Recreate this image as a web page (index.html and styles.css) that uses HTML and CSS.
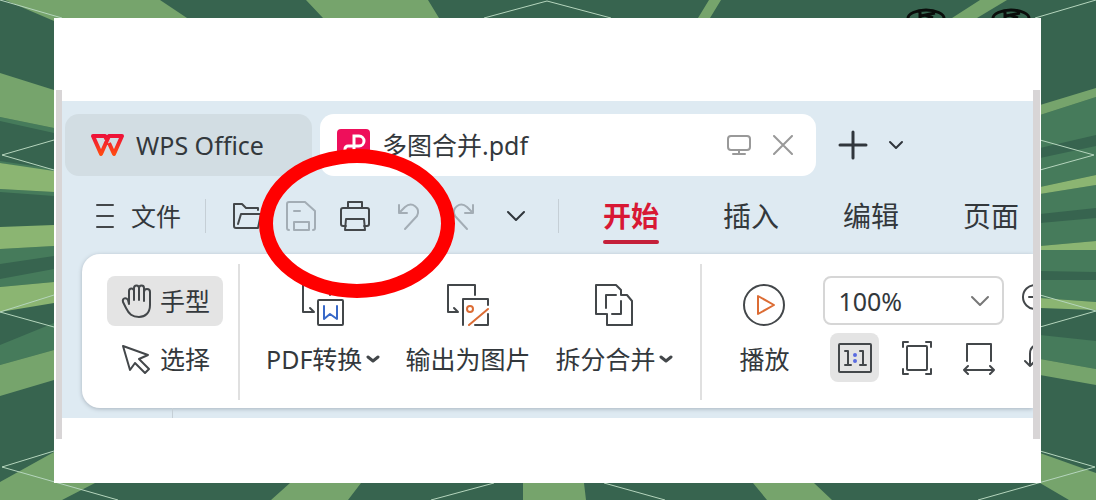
FILE: index.html
```html
<!DOCTYPE html>
<html lang="zh-CN">
<head>
    <meta charset="UTF-8">
    <meta name="viewport" content="width=device-width, initial-scale=1.0">
    <title>多图合并.pdf - WPS Office</title>
    <link rel="stylesheet" href="styles.css">
</head>
<body>

<!-- Green rays behind the sheet -->
<svg class="backdrop" viewBox="0 0 1096 500" preserveAspectRatio="none" aria-hidden="true">
    <rect width="1096" height="500" fill="#37644f"/>
    <g fill="#467b5b">
        <path d="M0 117l54 11v5L0 121zM0 161l54 8v4L0 163zM0 189l54 3v4L0 192zM0 249l54-3v10L0 264zM0 279l54-10v13L0 287zM0 345l54-22v27L0 365z"/>
        <path d="M1040 115l56-18v38l-56 13zM1040 158l56-12v29l-56 12zM1040 194l56-9v23l-56 6zM1040 223l56-5v23l-56 5zM1040 250h56v22l-56-1zM1040 280h56v22l-56-4zM1040 335l56 6v28l-56-10z"/>
    </g>
    <g fill="#76a46c">
        <path d="M5 0h155l27 18H54v3zM306 0h122l11 18H323zM709 0h12l-11 18h-12zM980 0h27l-30 18h-25z"/>
        <path d="M0 73l54 17v38L0 117zM0 365l54-15v30L0 396zM0 482l54-30v31h41l-33 17H0z"/>
        <path d="M1040 105l56-17v9l-56 18zM1040 359l56 10v16l-56-10zM1040 453l56 20v27h-27l-29-17z"/>
        <path d="M290 483h71l-13 17h-77zM523 483h61l2 17h-63zM753 483h61l18 17h-65z"/>
    </g>
    <g fill="#8bb572">
        <path d="M0 163l54 8v21L0 189zM0 227l54-2v21L0 249zM0 287l54-5v21L0 312z"/>
        <path d="M1040 187l56-12v10l-56 9zM1040 246l56-5v9h-56zM1040 298l56 4v8l-56-2z"/>
    </g>
    <g fill="none" stroke="#b5d5bd" stroke-width="1">
        <path d="M0 0l62 18M484 18l63-17 64 17M1096 0l-61 18"/>
        <path d="M54 140L2 155l52 15M54 295L0 312l54 15M54 451L2 467l116 33"/>
        <path d="M1040 140l54 15-54 15M1040 295l56 16-56 16M1040 451l55 16-117 33M494 483l-63 17M604 483l61 17"/>
    </g>
    <g fill="none" stroke="#0a0d0b" stroke-width="3">
        <path d="M908 18c0-4 8-8 18-8s18 4 18 8M920 12v6M935 13l-14 3M925 15l8 3"/>
        <path d="M993 18c0-4 8-8 18-8s18 4 18 8M1005 12v6M1020 13l-14 3M1010 15l8 3"/>
    </g>
</svg>

<main class="sheet">
    <div class="frame">
        <div class="window">

            <!-- Document tabs -->
            <header class="tabs">
                <button class="tab tab-home">
                    <svg width="34" height="24" viewBox="0 0 34 24" aria-hidden="true">
                        <defs>
                            <linearGradient id="wps" x1="0" y1="0" x2="0" y2="1">
                                <stop offset="0" stop-color="#ee1238"/>
                                <stop offset="1" stop-color="#ff4a12"/>
                            </linearGradient>
                        </defs>
                        <path d="M18 9l-3-6H3l8 18 8-18h13l-8 18-5-11" fill="none" stroke="url(#wps)" stroke-width="4" stroke-linejoin="round"/>
                    </svg>
                    <span>WPS Office</span>
                </button>
                <div class="tab tab-file">
                    <svg width="33" height="33" viewBox="0 0 33 33" aria-hidden="true">
                        <rect width="33" height="33" rx="4" fill="#ee0f5b"/>
                        <path d="M17 22V7h5a5 5 0 0 1 0 10H11a3 3 0 0 0-3 3v2" fill="none" stroke="#fff" stroke-width="3"/>
                    </svg>
                    <span class="file-name">多图合并.pdf</span>
                    <button class="plain" aria-label="窗口">
                        <svg class="line muted" width="24" height="24" viewBox="0 0 24 24">
                            <rect x="1" y="3" width="22" height="14" rx="3"/>
                            <path d="M12 17v4M6 21h12"/>
                        </svg>
                    </button>
                    <button class="plain" aria-label="关闭">
                        <svg class="line muted" width="20" height="20" viewBox="0 0 20 20">
                            <path d="M1 1l18 18M19 1L1 19"/>
                        </svg>
                    </button>
                </div>
                <button class="plain new-tab" aria-label="新建">
                    <svg class="line thick" width="30" height="30" viewBox="0 0 30 30">
                        <path d="M15 2v26M2 15h26"/>
                    </svg>
                </button>
                <button class="plain" aria-label="更多标签">
                    <svg class="line chevron" width="16" height="10" viewBox="0 0 16 10">
                        <path d="M2 2l6 6 6-6"/>
                    </svg>
                </button>
            </header>

            <!-- Quick access and menu -->
            <nav class="menubar">
                <button class="plain file-menu">
                    <svg class="line" width="18" height="26" viewBox="0 0 18 26">
                        <path d="M1 2h16M1 13h16M1 24h16"/>
                    </svg>
                    <span>文件</span>
                </button>
                <span class="divider"></span>
                <div class="quick">
                    <button class="plain" aria-label="打开">
                        <svg class="line" width="30" height="30" viewBox="0 0 30 30">
                            <path d="M26 9V7H14l-4-4H2v22q0 2 2 2h22l3-14H9L6 23"/>
                        </svg>
                    </button>
                    <button class="plain" aria-label="保存">
                        <svg class="line faded" width="30" height="30" viewBox="0 0 30 30">
                            <path d="M3 29q-2 0-2-2V3q0-2 2-2h16l10 9v17q0 2-2 2M8 29v-8h15v8zM8 10h6"/>
                        </svg>
                    </button>
                    <button class="plain" aria-label="打印">
                        <svg class="line" width="30" height="30" viewBox="0 0 30 30">
                            <path d="M8 7V1h14v6M6 25H3q-2 0-2-2V9q0-2 2-2h24q2 0 2 2v14q0 2-2 2h-3M6 18h18l1 11H5z"/>
                        </svg>
                    </button>
                    <button class="plain" aria-label="撤销">
                        <svg class="line faded" width="30" height="30" viewBox="0 0 30 30">
                            <path d="M5 4v8h8M5 12l6-6c7-6 16 1 12 9L11 28"/>
                        </svg>
                    </button>
                    <button class="plain" aria-label="恢复">
                        <svg class="line faded" width="30" height="30" viewBox="0 0 30 30">
                            <path d="M25 4v8h-8M25 12l-6-6C12 0 3 7 7 15l12 13"/>
                        </svg>
                    </button>
                    <button class="plain" aria-label="更多">
                        <svg class="line chevron" width="30" height="30" viewBox="0 0 30 30">
                            <path d="M6 11l8 8 8-8"/>
                        </svg>
                    </button>
                </div>
                <span class="divider"></span>
                <div class="menu">
                    <a class="active" href="#start">开始</a>
                    <a href="#insert">插入</a>
                    <a href="#edit">编辑</a>
                    <a href="#page">页面</a>
                </div>
            </nav>

            <!-- Ribbon -->
            <section class="ribbon" id="start">
                <div class="group modes">
                    <button class="mode selected">
                        <svg class="line" width="31" height="35" viewBox="0 0 31 35">
                            <path d="M8 20V7a2 2 0 0 1 5 0v9V4a2 2 0 0 1 5 0v12V4a2 2 0 0 1 5 0v13V8a2 2 0 0 1 6 0v13c0 8-5 12-11 12-7 0-10-3-13-9L2 18c-1-4 3-5 5-2l1 4"/>
                        </svg>
                        <span>手型</span>
                    </button>
                    <button class="mode">
                        <svg class="line" width="31" height="31" viewBox="0 0 31 31">
                            <path d="M2 2l25 9-9 4 10 10-4 4-10-10-5 7z"/>
                        </svg>
                        <span>选择</span>
                    </button>
                </div>
                <span class="divider tall"></span>
                <div class="group tools">
                    <button class="tool">
                        <svg class="line" width="42" height="42" viewBox="0 0 42 42">
                            <path d="M28 11V1H1v27h11M8 24l4 4"/>
                            <rect x="16" y="16" width="25" height="25" rx="1"/>
                            <path class="blue" d="M22 22v13l6-5 7 5V22"/>
                        </svg>
                        <span>PDF转换<svg class="line caret" width="14" height="9" viewBox="0 0 14 9"><path d="M2 2l5 4 5-4"/></svg></span>
                    </button>
                    <button class="tool">
                        <svg class="line" width="42" height="42" viewBox="0 0 42 42">
                            <path d="M28 11V1H1v27h10M7 24l4 4M16 41V15h25v6M41 30v11H28"/>
                            <circle class="orange" cx="23" cy="25" r="3"/>
                            <path class="orange" d="M22 41l19-16"/>
                        </svg>
                        <span>输出为图片</span>
                    </button>
                    <button class="tool">
                        <svg class="line" width="38" height="42" viewBox="0 0 38 42">
                            <path d="M11 30H1V1h20l5 5v5h6l5 6v24H12V30M11 24V11h10M26 17v13h-9"/>
                        </svg>
                        <span>拆分合并<svg class="line caret" width="14" height="9" viewBox="0 0 14 9"><path d="M2 2l5 4 5-4"/></svg></span>
                    </button>
                </div>
                <span class="divider tall"></span>
                <div class="group play">
                    <button class="tool">
                        <svg class="line" width="42" height="42" viewBox="0 0 42 42">
                            <circle cx="21" cy="21" r="20"/>
                            <path class="orange" d="M15 12v18l16-9z"/>
                        </svg>
                        <span>播放</span>
                    </button>
                </div>
                <div class="group zoom">
                    <div class="zoom-row">
                        <label class="zoom-level">
                            <select aria-label="缩放比例">
                                <option>100%</option>
                            </select>
                            <svg class="line gray" width="20" height="12" viewBox="0 0 20 12"><path d="M2 2l8 8 8-8"/></svg>
                        </label>
                        <button class="plain" aria-label="缩小">
                            <svg class="line" width="30" height="42" viewBox="0 0 30 42">
                                <circle cx="14" cy="17" r="12"/>
                                <path d="M8 17h12"/>
                            </svg>
                        </button>
                    </div>
                    <div class="zoom-row fits">
                        <button class="fit selected" aria-label="实际大小">
                            <svg class="line" width="34" height="30" viewBox="0 0 34 30">
                                <rect x="1" y="1" width="32" height="28" rx="1"/>
                                <path d="M7 8h3v14M7 22h6M22 8h3v14M22 22h6"/>
                                <path class="dots" d="M17 12h0M17 18h0"/>
                            </svg>
                        </button>
                        <button class="fit" aria-label="适合页面">
                            <svg class="line" width="30" height="34" viewBox="0 0 30 34">
                                <rect x="5" y="5" width="20" height="24" rx="1"/>
                                <path d="M1 6V1h5M24 1h5v5M29 28v5h-5M6 33H1v-5"/>
                            </svg>
                        </button>
                        <button class="fit" aria-label="适合宽度">
                            <svg class="line" width="34" height="34" viewBox="0 0 34 34">
                                <path d="M5 20V3h24v17M2 29h30M6 25l-4 4 4 4M28 25l4 4-4 4"/>
                            </svg>
                        </button>
                        <button class="fit" aria-label="旋转">
                            <svg class="line" width="34" height="34" viewBox="0 0 34 34">
                                <path d="M1 20l5 5 5-5M6 25V13Q6 4 15 4h10"/>
                            </svg>
                        </button>
                    </div>
                </div>
            </section>
            <div class="page-edge"></div>

            <!-- Red ring over the print button -->
            <div class="ring"></div>
        </div>
    </div>
</main>

</body>
</html>
```
FILE: styles.css
```css
/* General styling */
* {
    box-sizing: border-box;
}

body {
    margin: 0;
    min-height: 100vh;
    padding: 18px 55px 17px 54px;
    font-family: "Noto Sans", "Noto Sans CJK SC", sans-serif;
    font-size: 25px;
    line-height: 36px;
    color: #33383c;
    background: #37644f;
}

button {
    font: inherit;
    color: inherit;
    border: none;
    background: none;
    padding: 0;
    cursor: pointer;
    white-space: nowrap;
}

svg {
    display: block;
    flex: none;
}

.backdrop {
    position: absolute;
    top: 0;
    left: 0;
    width: 100%;
    height: 100%;
}

/* Sheet and frame */
.sheet {
    position: relative;
    background: #ffffff;
    padding: 72px 1px 44px 2px;
}

.frame {
    border: solid #d8d5d6;
    border-width: 0 7px 0 6px;
    padding: 11px 0 21px;
}

.window {
    position: relative;
    overflow: hidden;
    padding-top: 13px;
    background: #deeaf2;
}

/* Icon strokes */
.line {
    fill: none;
    stroke: #43474a;
    stroke-width: 2;
    stroke-linecap: round;
    stroke-linejoin: round;
}

.thick {
    stroke: #30363c;
    stroke-width: 3;
}

.chevron {
    stroke: #30363c;
}

.muted {
    stroke: #999999;
}

.gray {
    stroke: #777777;
}

.faded {
    stroke: #a3adb5;
}

.blue {
    stroke: #3768c8;
}

.orange {
    stroke: #dc6c34;
}

.dots {
    stroke: #5a6be0;
    stroke-width: 4;
}

.plain {
    display: flex;
    align-items: center;
    justify-content: center;
    flex: none;
}

/* Document tabs */
.tabs {
    display: flex;
    align-items: center;
    gap: 8px;
    padding: 0 3px;
}

.tab {
    display: flex;
    align-items: center;
    gap: 12px;
    height: 62px;
    border-radius: 14px;
    white-space: nowrap;
}

.tab-home {
    flex: 0 1 247px;
    padding-left: 25px;
    background: #d2dde3;
}

.tab-file {
    flex: 0 1 496px;
    gap: 22px;
    padding: 0 23px 0 17px;
    background: #ffffff;
}

.file-name {
    flex: 1;
    margin-left: -10px;
}

.new-tab {
    margin: 0 12px 0 14px;
}

/* Quick access and menu */
.menubar {
    display: flex;
    align-items: center;
    padding: 12px 0 10px 34px;
    white-space: nowrap;
}

.file-menu {
    gap: 17px;
}

.divider {
    flex: none;
    width: 1px;
    height: 34px;
    margin-left: 24px;
    background: #c5cfd6;
}

.quick {
    display: flex;
    gap: 24px;
    margin-left: 26px;
}

.quick + .divider {
    margin-left: 26px;
}

.menu {
    display: flex;
    gap: 64px;
    margin-left: 44px;
    font-size: 28px;
    line-height: 56px;
}

.menu a {
    color: inherit;
    text-decoration: none;
}

.menu .active {
    position: relative;
    color: #d81834;
    font-weight: bold;
}

.menu .active::after {
    content: "";
    position: absolute;
    left: 0;
    right: 0;
    bottom: 0;
    height: 4px;
    border-radius: 2px;
    background: #c4203a;
}

/* Ribbon */
.ribbon {
    display: flex;
    margin-left: 20px;
    padding: 10px 0 8px 25px;
    border-radius: 18px 0 0 18px;
    background: #ffffff;
    box-shadow: 0 1px 4px #a9b4be;
}

.group {
    display: flex;
    flex: none;
    padding-top: 12px;
}

.modes {
    flex-direction: column;
    gap: 8px;
}

.mode {
    display: flex;
    align-items: center;
    gap: 8px;
    height: 50px;
    padding: 0 13px 0 14px;
    border-radius: 8px;
}

.selected {
    background: #e4e4e4;
}

.divider.tall {
    width: 2px;
    height: 136px;
    margin-left: 15px;
    background: #e0e0e0;
}

.tools {
    gap: 25px;
    margin-left: 26px;
}

.tools + .divider.tall {
    margin-left: 27px;
}

.tool {
    display: flex;
    flex-direction: column;
    align-items: center;
    gap: 15px;
    padding-top: 8px;
}

.tool span {
    display: flex;
    align-items: center;
    gap: 4px;
}

.caret {
    stroke-width: 3;
}

.play {
    margin-left: 37px;
}

/* Zoom controls */
.zoom {
    flex-direction: column;
    gap: 8px;
    margin-left: 34px;
}

.zoom-row {
    display: flex;
    align-items: center;
    gap: 17px;
}

.zoom-level {
    position: relative;
}

.zoom-level select {
    display: block;
    appearance: none;
    width: 181px;
    height: 49px;
    padding: 0 13px;
    border: 2px solid #d6d6d6;
    border-radius: 8px;
    font: inherit;
    color: inherit;
    background: #ffffff;
}

.zoom-level svg {
    position: absolute;
    right: 14px;
    top: 19px;
    pointer-events: none;
}

.fits {
    gap: 13px;
    padding-left: 7px;
}

.fit {
    display: flex;
    align-items: center;
    justify-content: center;
    width: 49px;
    height: 49px;
    border-radius: 8px;
}

/* Edge of the page under the ribbon */
.page-edge {
    height: 10px;
    margin-left: 110px;
    border-left: 1px solid #c5cfd6;
}

.ring {
    position: absolute;
    left: 197px;
    top: 48px;
    width: 196px;
    height: 149px;
    border: 14px solid #ff0000;
    border-radius: 50%;
    pointer-events: none;
}
```
